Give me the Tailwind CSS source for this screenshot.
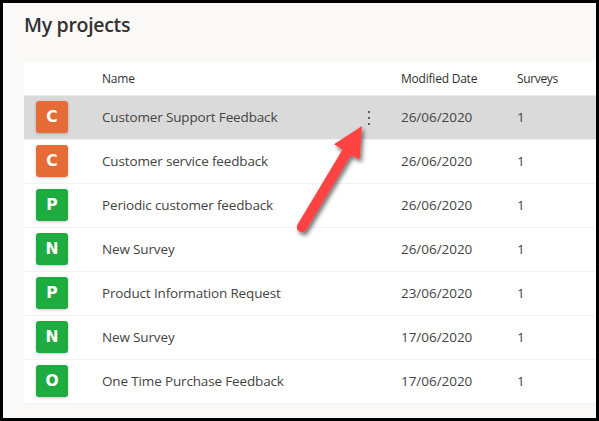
<!DOCTYPE html>
<html lang="en">
<head>
<meta charset="utf-8">
<title>My projects</title>
<script src="https://cdn.jsdelivr.net/npm/@tailwindcss/browser@4"></script>
</head>
<body class="font-['Open_Sans','Noto_Sans',sans-serif]">
<main class="relative h-[421px] w-[599px] overflow-hidden border-[3px] border-black bg-[#faf9f8] pl-[21px] text-[#323130]">
  <h1 class="flex h-[59px] items-start pt-[8px] text-[19.5px] leading-[28px] font-semibold tracking-[-0.3px] whitespace-nowrap"><span>My projects</span></h1>
  <section class="bg-white text-[13.5px] text-[#454443]">
    <div class="grid h-[34px] grid-cols-[78px_299px_116px_1fr] items-center border-b border-[#eaeaea] text-[12px] tracking-[-0.22px] text-[#323130]">
      <span></span><span>Name</span><span>Modified Date</span><span class="tracking-[-0.35px]">Surveys</span>
    </div>
    <div id="rows"></div>
  </section>
  <svg class="absolute -top-[3px] -left-[3px]" width="599" height="421" viewBox="0 0 599 421">
    <defs><filter id="shadow" x="-20%" y="-20%" width="150%" height="150%"><feDropShadow dx="2" dy="3" stdDeviation="2" flood-color="#000" flood-opacity=".55"/></filter></defs>
    <path filter="url(#shadow)" fill="#ff4343" d="M362 126 L334 144.300 L342.500 149.500 L297.500 224.500 A5 5 0 0 0 306.300 229.800 L351 155 L359.700 159.500 Z"/>
  </svg>
</main>
<template id="row">
  <div class="grid h-[44px] grid-cols-[78px_266px_33px_116px_1fr] items-center border-b border-[#f3f2f1]">
    <div class="mb-[2px] ml-[12px] flex size-[32px] items-center justify-center rounded-[3px] pt-[3px] font-['DejaVu_Sans'] text-[15.5px] font-bold text-white shadow-[0_1px_3px_rgba(0,0,0,0.22)]"></div>
    <span class="tracking-[-0.15px] whitespace-nowrap"></span>
    <i class="flex h-[14px] flex-col justify-between"></i>
    <span class="tracking-[-0.04px]"></span>
    <span>1</span>
  </div>
</template>
<script>
const colors = { C: 'bg-[#e66c37]', P: 'bg-[#1eab40]', N: 'bg-[#1eab40]', O: 'bg-[#1eab40]' };
const data = [
  ['C', 'Customer Support Feedback', '26/06/2020'],
  ['C', 'Customer service feedback', '26/06/2020'],
  ['P', 'Periodic customer feedback', '26/06/2020'],
  ['N', 'New Survey', '26/06/2020'],
  ['P', 'Product Information Request', '23/06/2020'],
  ['N', 'New Survey', '17/06/2020'],
  ['O', 'One Time Purchase Feedback', '17/06/2020'],
];
data.forEach(([letter, name, date], i) => {
  const row = document.getElementById('row').content.firstElementChild.cloneNode(true);
  const [tile, title, menu, modified] = row.children;
  tile.textContent = letter;
  tile.classList.add(colors[letter]);
  title.textContent = name;
  modified.textContent = date;
  if (i === 0) {
    row.classList.add('bg-[#dadada]', 'bg-clip-padding');
    menu.innerHTML = '<b class="size-[2px] bg-[#605e5c]"></b><b class="size-[2px] bg-[#605e5c]"></b><b class="size-[2px] bg-[#605e5c]"></b>';
  }
  document.getElementById('rows').append(row);
});
</script>
</body>
</html>
